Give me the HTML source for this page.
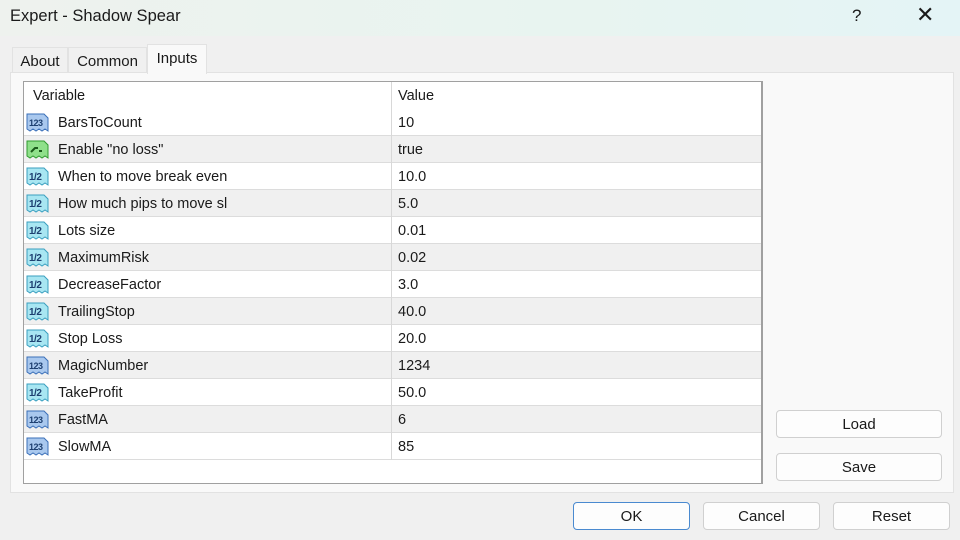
<!DOCTYPE html>
<html><head><meta charset="utf-8"><style>
*{margin:0;padding:0;box-sizing:border-box}
body{width:960px;height:540px;overflow:hidden;background:#f0f0f0;font-family:"Liberation Sans",Arial,sans-serif;position:relative;color:#1a1a1a}
.title{position:absolute;left:0;top:0;width:960px;height:36px;background:linear-gradient(90deg,#eef2ee,#e8f4f0 60%,#e4f4f6);}
.title .t{position:absolute;left:10px;top:7px;font-size:16.5px}
.title .q{position:absolute;left:852px;top:6px;font-size:17px}
.title .x{position:absolute;left:916px;top:2px;font-size:22px;font-weight:300}
.tab{position:absolute;top:47px;height:26px;font-size:15px;padding-top:5px;text-align:center;background:#f0f0f0;border:1px solid #e2e2e2;border-bottom:none}
.panel{position:absolute;left:10px;top:72px;width:944px;height:421px;background:#f9f9f9;border:1px solid #e2e2e2}
.grid{position:absolute;left:23px;top:81px;width:740px;height:403px;background:#fff;border:1px solid #a0a0a0;border-right:2px solid #a0a0a0}
.row{position:absolute;left:0;width:737px;height:27px;border-bottom:1px solid #dcdcdc;font-size:14.5px}
.row.g{background:#f0f0f0}
.row .n{position:absolute;left:34px;top:6px}
.row .v{position:absolute;left:374px;top:6px}
.row .d{position:absolute;left:367px;top:0;height:27px;border-left:1px solid #d8d8d8}
.row svg{position:absolute;left:2px;top:3px}
.hdr{position:absolute;left:0;top:0;width:737px;height:27px;font-size:14.5px}
.btn{position:absolute;height:28px;background:#fdfdfd;border:1px solid #d0d0d0;border-radius:4px;text-align:center;font-size:15px;padding-top:5px}
</style></head><body>
<div class="title"><span class="t">Expert - Shadow Spear</span><span class="q">?</span><span class="x">✕</span></div>
<div class="tab" style="left:12px;width:56px">About</div>
<div class="tab" style="left:68px;width:79px">Common</div>
<div class="panel"></div>
<div class="tab" style="left:147px;width:60px;top:44px;height:30px;background:#f9f9f9;padding-top:5px">Inputs</div>
<div class="grid">
<div class="hdr"><span style="position:absolute;left:9px;top:6px">Variable</span><span style="position:absolute;left:374px;top:6px">Value</span><div style="position:absolute;left:367px;top:0;height:27px;border-left:1px solid #d8d8d8"></div></div>
<div id="rows"></div>
</div>
<div class="btn" style="left:776px;top:410px;width:166px">Load</div>
<div class="btn" style="left:776px;top:453px;width:166px">Save</div>
<div class="btn" style="left:573px;top:502px;width:117px;border-color:#4a8ad0">OK</div>
<div class="btn" style="left:703px;top:502px;width:117px">Cancel</div>
<div class="btn" style="left:833px;top:502px;width:117px">Reset</div>
<script>
var d=[["i","BarsToCount","10"],["b","Enable \"no loss\"","true"],["f","When to move break even","10.0"],["f","How much pips to move sl","5.0"],["f","Lots size","0.01"],["f","MaximumRisk","0.02"],["f","DecreaseFactor","3.0"],["f","TrailingStop","40.0"],["f","Stop Loss","20.0"],["i","MagicNumber","1234"],["f","TakeProfit","50.0"],["i","FastMA","6"],["i","SlowMA","85"]];
function ic(t){var c={i:["#a9c8ee","#3a6fb8","123"],b:["#8fe08a","#2f9a2f",""],f:["#a8e6f2","#3a9fbf","1/2"]}[t];
var s='<svg width="24" height="21" viewBox="0 0 24 21"><path d="M1 2h17l4 4v13l-3-2-3 2-3-2-3 2-3-2-3 2-3-2z" fill="'+c[0]+'" stroke="'+c[1]+'" stroke-width="1"/>';
if(t=="b")s+='<path d="M5 13l4-4h3M13 12h3" stroke="#1a5a1a" stroke-width="2" fill="none"/>';
else s+='<text x="3" y="14" font-size="'+(t=="i"?9:10)+'" font-weight="bold" fill="#1d3f70" font-family="Liberation Sans" letter-spacing="-0.5">'+c[2]+'</text>';
return s+'</svg>';}
var h='';d.forEach(function(r,k){h+='<div class="row'+(k%2?' g':'')+'" style="top:'+(27+27*k)+'px">'+ic(r[0])+'<span class="n">'+r[1]+'</span><div class="d"></div><span class="v">'+r[2]+'</span></div>'});
document.getElementById('rows').innerHTML=h;
</script>
</body></html>
